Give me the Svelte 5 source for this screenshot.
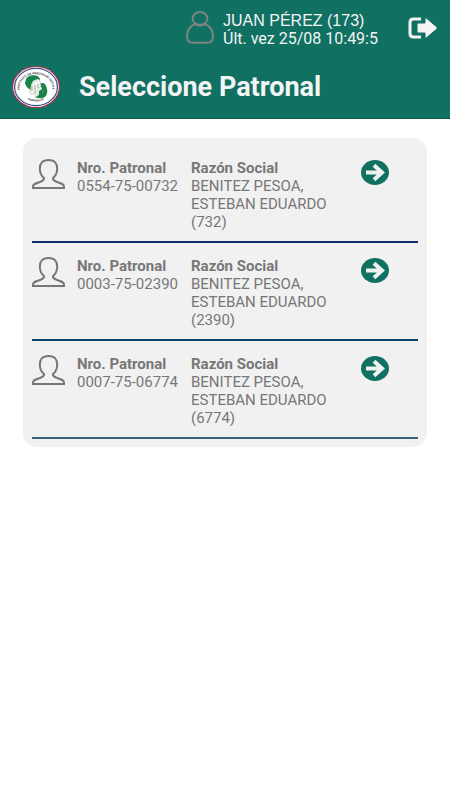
<script lang="ts">
	interface Patronal {
		numero: string;
		razonSocial: string;
		codigo: number;
	}

	const usuario = { nombre: 'JUAN PÉREZ', codigo: 173, ultimaVez: '25/08 10:49:5' };

	const patronales: Patronal[] = [
		{ numero: '0554-75-00732', razonSocial: 'BENITEZ PESOA, ESTEBAN EDUARDO', codigo: 732 },
		{ numero: '0003-75-02390', razonSocial: 'BENITEZ PESOA, ESTEBAN EDUARDO', codigo: 2390 },
		{ numero: '0007-75-06774', razonSocial: 'BENITEZ PESOA, ESTEBAN EDUARDO', codigo: 6774 }
	];

	let seleccionado: string | null = $state(null);

	function seleccionar(patronal: Patronal) {
		seleccionado = patronal.numero;
	}
</script>

<header class="header">
	<div class="user-bar">
		<svg class="user-icon" viewBox="0 0 28 33" aria-hidden="true">
			<ellipse cx="14" cy="7.5" rx="7.4" ry="6.5" />
			<path d="M8.5 13.2C4 15.5 1 19.5 1 25.5C1 30 3 31.8 7 31.8H21C25 31.8 27 30 27 25.5C27 19.5 24 15.5 19.5 13.2C16 15.2 12 15.2 8.5 13.2Z" />
		</svg>
		<div class="user-info">
			<div class="user-name">{usuario.nombre} ({usuario.codigo})</div>
			<div class="user-last">Últ. vez {usuario.ultimaVez}</div>
		</div>
		<button class="logout" type="button" aria-label="Salir">
			<svg viewBox="0 0 30 22" aria-hidden="true">
				<path class="door" d="M13 2H5.5Q2 2 2 5.5V16.5Q2 20 5.5 20H13" />
				<path class="arrow" d="M10.5 6H17V2Q17 0 18.8 1.4L28.8 10Q30 11 28.8 12L18.8 20.6Q17 22 17 20V16H10.5Q9 16 9 14.5V7.5Q9 6 10.5 6Z" />
			</svg>
		</button>
	</div>

	<div class="title-bar">
		<svg class="logo" viewBox="0 0 48 42" aria-hidden="true">
			<defs>
				<path id="arc-top" d="M12.4 31.5A16.4 13.6 0 1 1 35.6 31.5" />
				<path id="arc-bottom" d="M12 31.5A18 16 0 0 0 36 31.5" />
			</defs>
			<ellipse cx="24" cy="21" rx="24" ry="21" fill="#b9323f" />
			<ellipse cx="24" cy="21" rx="22.8" ry="19.9" fill="#fff" />
			<ellipse cx="24" cy="21" rx="21.4" ry="18.6" fill="none" stroke="#354a94" stroke-width="1.2" />
			<text class="legend"><textPath href="#arc-top" startOffset="50%">INSTITUTO DE PREVISION SOCIAL</textPath></text>
			<text class="legend"><textPath href="#arc-bottom" startOffset="50%">PARAGUAY</textPath></text>
			<path d="M14 13Q17 8.5 24 9.5Q28 10.5 28 14L25 13L21 15L19 19V24Q14 22 13 17Z" fill="#168447" />
			<path d="M28 18Q30 16 33 18Q37 25 34 30Q30 34 23 31L27 29V25L30 23Z" fill="#168447" />
			<path d="M21 17L25 13L28 15L29 20L26 24V29L23 32V26L20 29L18 27L19 20Z" fill="#f4f7f4" stroke="#9aa49d" stroke-width="0.5" />
			<path d="M20 20V25M23 19V27M26 18V22M31 24V28" stroke="#7b8980" stroke-width="0.7" />
		</svg>
		<h1>Seleccione Patronal</h1>
	</div>
</header>

<main>
	<ul class="card">
		{#each patronales as patronal (patronal.numero)}
			<li class="row" class:selected={seleccionado === patronal.numero}>
				<svg class="person" viewBox="0 0 33 30" aria-hidden="true">
					<path d="M16.5 1C10.5 1 7.5 4.5 7.8 10C8 14 9.5 17 12 19C12.5 21 11 21.8 8.5 22.8C4 24.3 1 25 1 27.5V29H32V27.5C32 25 29 24.3 24.5 22.8C22 21.8 20.5 21 21 19C23.5 17 25 14 25.2 10C25.5 4.5 22.5 1 16.5 1Z" />
				</svg>
				<dl class="data">
					<div class="numero">
						<dt>Nro. Patronal</dt>
						<dd>{patronal.numero}</dd>
					</div>
					<div class="razon">
						<dt>Razón Social</dt>
						<dd>{patronal.razonSocial} ({patronal.codigo})</dd>
					</div>
				</dl>
				<button
					class="go"
					type="button"
					aria-label="Seleccionar {patronal.numero}"
					onclick={() => seleccionar(patronal)}
				>
					<svg viewBox="0 0 28 25" aria-hidden="true">
						<ellipse cx="14" cy="12.5" rx="14" ry="12.5" />
						<path d="M5 12.5H20M13 5.2L21 12.5L13 19.8" />
					</svg>
				</button>
			</li>
		{/each}
	</ul>
</main>

<style>
	:global(body) {
		margin: 0;
		background: #fff;
		font-family: Roboto, 'Liberation Sans', sans-serif;
	}

	button {
		padding: 0;
		border: 0;
		background: none;
		cursor: pointer;
	}

	svg {
		display: block;
	}

	.header {
		padding: 11px 12px 10px;
		background: #107062;
		border-bottom: 1px solid #0b5a4c;
		color: #f4f4f4;
	}

	.user-bar {
		display: flex;
		justify-content: flex-end;
		align-items: flex-start;
	}

	.user-icon {
		width: 28px;
		height: 33px;
		margin-right: 9px;
		fill: none;
		stroke: #7d8580;
		stroke-width: 2;
	}

	.user-info {
		min-width: 160px;
		padding-top: 1px;
		font-size: 16px;
		line-height: 18px;
		white-space: nowrap;
	}

	.user-name {
		font-family: 'Liberation Sans', Arial, sans-serif;
	}

	.logout {
		width: 30px;
		margin: 6px 0 0 25px;
	}

	.door {
		fill: none;
		stroke: #f4f4f4;
		stroke-width: 3;
	}

	.arrow {
		fill: #f4f4f4;
		stroke: #107062;
		stroke-width: 1;
	}

	.title-bar {
		display: flex;
		align-items: center;
		gap: 19px;
		margin-top: 18px;
	}

	.logo {
		width: 48px;
		height: 42px;
	}

	.legend {
		font-family: 'Liberation Sans', Arial, sans-serif;
		font-size: 3px;
		font-weight: 700;
		text-anchor: middle;
		fill: #33333b;
	}

	h1 {
		margin: 0;
		font-size: 27px;
		line-height: 30px;
		font-weight: 700;
	}

	main {
		padding: 19px 23px;
	}

	.card {
		margin: 0;
		padding: 7px 9px 8px;
		list-style: none;
		border-radius: 14px;
		background: #f1f1f1;
		color: #777;
	}

	.row {
		display: flex;
		align-items: flex-start;
		padding: 14px 29px 10px 0;
		border-bottom: 2px solid #0b2f66;
	}

	.row:nth-child(2) {
		border-color: #0a456c;
	}

	.row:last-child {
		border-color: #36627a;
	}

	.row.selected {
		background: #e6efed;
	}

	.person {
		width: 33px;
		height: 30px;
		margin-right: 12px;
		fill: none;
		stroke: #777;
		stroke-width: 2;
	}

	.data {
		display: flex;
		flex: 1;
		gap: 14px;
		margin: 0;
		font-size: 15px;
		line-height: 18px;
	}

	.numero {
		flex: none;
		width: 100px;
		white-space: nowrap;
	}

	.razon {
		max-width: 150px;
	}

	dt {
		font-weight: 700;
	}

	dd {
		margin: 0;
	}

	.go {
		width: 28px;
		margin-top: 1px;
	}

	.go ellipse {
		fill: #107062;
	}

	.go path {
		fill: none;
		stroke: #f1f1f1;
		stroke-width: 4;
	}
</style>
